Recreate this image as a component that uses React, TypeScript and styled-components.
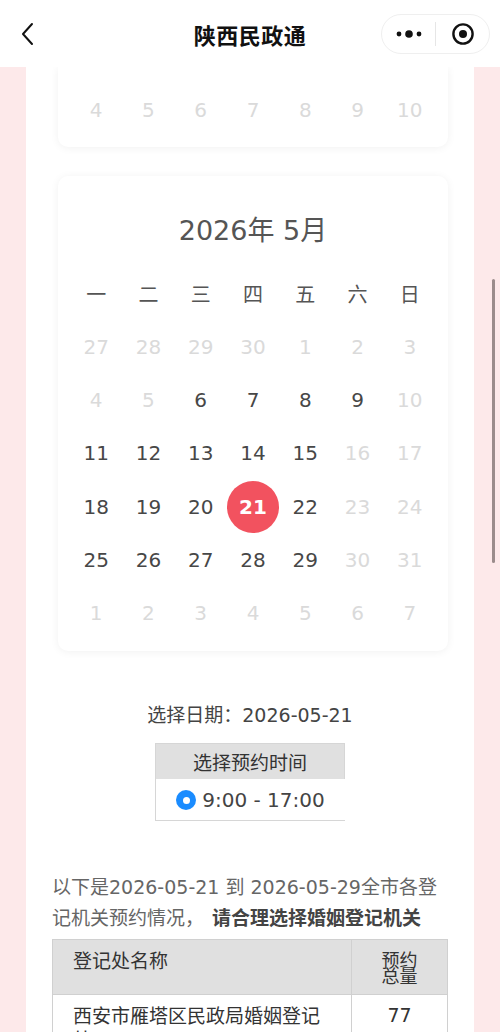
import React from "react";
import styled, { createGlobalStyle, css } from "styled-components";

const GlobalStyle = createGlobalStyle`
  html, body {
    margin: 0;
    padding: 0;
    overflow: hidden;
    background: #fde9ea;
  }
  body {
    font-family: "DejaVu Sans", "Noto Sans CJK SC", sans-serif;
    color: #444;
  }
  * { box-sizing: border-box; }
`;

const Page = styled.div`
  height: 1032px;
  overflow: hidden;
  background: #fde9ea;
  position: relative;
`;

const Header = styled.header`
  height: 67px;
  background: #fff;
  display: grid;
  grid-template-columns: 1fr auto 1fr;
  align-items: center;
  position: relative;
  z-index: 2;
`;

const BackButton = styled.div`
  justify-self: start;
  padding-left: 20px;
  display: flex;
  align-items: center;
`;

const Title = styled.h1`
  margin: 0;
  font-family: "Noto Sans CJK SC", sans-serif;
  font-size: 22px;
  font-weight: 700;
  color: #111;
  letter-spacing: 0.5px;
`;

const Capsule = styled.div`
  justify-self: end;
  margin-right: 10px;
  width: 109px;
  height: 40px;
  border: 1px solid #efefef;
  border-radius: 20px;
  display: flex;
  align-items: center;
`;

const CapsuleHalf = styled.div`
  flex: 1;
  display: flex;
  align-items: center;
  justify-content: center;
`;

const CapsuleDivider = styled.div`
  width: 1px;
  height: 24px;
  background: #e6e6e6;
`;

const Column = styled.main`
  margin: 0 26px;
  background: #fff;
  padding-bottom: 40px;
`;

const Card = styled.section<{ $cut?: boolean }>`
  margin: 0 26px 0 32px;
  background: #fff;
  border-radius: ${(p) => (p.$cut ? "0 0 10px 10px" : "10px")};
  box-shadow: 0 1px 8px rgba(0, 0, 0, 0.06);
  padding: ${(p) => (p.$cut ? "16px 12px 11px" : "31px 12px 11px")};
  & + & {
    margin-top: 29px;
  }
`;

const MonthTitle = styled.div`
  text-align: center;
  font-size: 27px;
  line-height: 48px;
  color: #555;
  margin-bottom: 12px;
`;

const Grid = styled.div`
  display: grid;
  grid-template-columns: repeat(7, 1fr);
  grid-auto-rows: 53.2px;
`;

const WeekDay = styled.div`
  display: flex;
  align-items: center;
  justify-content: center;
  font-family: "Noto Sans CJK SC", sans-serif;
  font-size: 20px;
  color: #555;
`;

const Day = styled.div<{ $muted?: boolean; $selected?: boolean }>`
  display: flex;
  align-items: center;
  justify-content: center;
  font-size: 20px;
  color: ${(p) => (p.$muted ? "#dadada" : "#474747")};
  ${(p) =>
    p.$selected &&
    css`
      & > span {
        width: 52px;
        height: 52px;
        border-radius: 50%;
        background: #f2525f;
        color: #fff;
        font-weight: 700;
        display: flex;
        align-items: center;
        justify-content: center;
      }
    `}
`;

const SelectedDate = styled.div`
  margin-top: 49px;
  text-align: center;
  font-size: 19px;
  line-height: 30px;
  color: #444;
`;

const TimeBox = styled.div`
  width: 190px;
  margin: 13px auto 0;
`;

const TimeHead = styled.div`
  height: 36px;
  background: #e0e0e0;
  border: 1px solid #d6d6d6;
  border-bottom: none;
  display: flex;
  align-items: center;
  justify-content: center;
  font-family: "Noto Sans CJK SC", sans-serif;
  font-size: 19px;
  color: #333;
`;

const TimeOption = styled.label`
  height: 42px;
  padding-top: 2px;
  border-left: 1px solid #d6d6d6;
  border-bottom: 1px solid #d6d6d6;
  display: flex;
  align-items: center;
  justify-content: center;
  gap: 6px;
  font-size: 20px;
  color: #444;
`;

const Radio = styled.span`
  width: 20px;
  height: 20px;
  border-radius: 50%;
  background: #1a8cff;
  display: flex;
  align-items: center;
  justify-content: center;
  &::after {
    content: "";
    width: 7px;
    height: 7px;
    border-radius: 50%;
    background: #fff;
  }
`;

const Notice = styled.p`
  margin: 51px 26px 0;
  font-size: 19px;
  line-height: 31px;
  color: #666;
`;

const Strong = styled.b`
  color: #444;
  font-weight: 700;
  margin-left: 8px;
`;

const Table = styled.table`
  margin: 5px 26px 0;
  width: calc(100% - 52px);
  border-collapse: collapse;
  font-family: "Noto Sans CJK SC", sans-serif;
`;

const Th = styled.th<{ $narrow?: boolean }>`
  background: #e0e0e0;
  border: 1px solid #d0d0d0;
  height: 55px;
  vertical-align: top;
  font-weight: 400;
  color: #333;
  text-align: left;
  font-size: 19px;
  line-height: 24px;
  padding: 8px 20px;
  ${(p) =>
    p.$narrow &&
    css`
      width: 96px;
      text-align: center;
      font-size: 18px;
      line-height: 16px;
      padding: 11px 28px 0;
    `}
`;

const Td = styled.td<{ $num?: boolean }>`
  border: 1px solid #d0d0d0;
  border-top: none;
  vertical-align: top;
  font-size: 19px;
  line-height: 24px;
  color: #333;
  padding: 8px 20px;
  text-align: ${(p) => (p.$num ? "center" : "left")};
  ${(p) =>
    p.$num &&
    css`
      font-family: "DejaVu Sans", sans-serif;
    `}
`;

const ScrollThumb = styled.div`
  position: absolute;
  right: 5px;
  top: 279px;
  width: 3px;
  height: 284px;
  border-radius: 2px;
  background: #9b8c8c;
`;

type Cell = { d: number; muted?: boolean; selected?: boolean };

const mayRows: Cell[][] = [
  [27, 28, 29, 30, 1, 2, 3].map((d) => ({ d, muted: true })),
  [
    { d: 4, muted: true },
    { d: 5, muted: true },
    { d: 6 },
    { d: 7 },
    { d: 8 },
    { d: 9 },
    { d: 10, muted: true },
  ],
  [
    { d: 11 },
    { d: 12 },
    { d: 13 },
    { d: 14 },
    { d: 15 },
    { d: 16, muted: true },
    { d: 17, muted: true },
  ],
  [
    { d: 18 },
    { d: 19 },
    { d: 20 },
    { d: 21, selected: true },
    { d: 22 },
    { d: 23, muted: true },
    { d: 24, muted: true },
  ],
  [
    { d: 25 },
    { d: 26 },
    { d: 27 },
    { d: 28 },
    { d: 29 },
    { d: 30, muted: true },
    { d: 31, muted: true },
  ],
  [1, 2, 3, 4, 5, 6, 7].map((d) => ({ d, muted: true })),
];

const aprilTail: Cell[] = [4, 5, 6, 7, 8, 9, 10].map((d) => ({ d, muted: true }));

const weekDays = ["一", "二", "三", "四", "五", "六", "日"];

function Days({ cells }: { cells: Cell[] }) {
  return (
    <>
      {cells.map((c, i) => (
        <Day key={i} $muted={c.muted} $selected={c.selected}>
          <span>{c.d}</span>
        </Day>
      ))}
    </>
  );
}

export default function App() {
  return (
    <Page>
      <GlobalStyle />
      <Header>
        <BackButton>
          <svg width="14" height="24" viewBox="0 0 14 24">
            <path d="M12 2 L3 12 L12 22" fill="none" stroke="#111" strokeWidth="2" strokeLinecap="round" strokeLinejoin="round" />
          </svg>
        </BackButton>
        <Title>陕西民政通</Title>
        <Capsule>
          <CapsuleHalf>
            <svg width="28" height="10" viewBox="0 0 28 10">
              <circle cx="4" cy="5" r="2.4" fill="#111" />
              <circle cx="14" cy="5" r="3.8" fill="#111" />
              <circle cx="24" cy="5" r="2.4" fill="#111" />
            </svg>
          </CapsuleHalf>
          <CapsuleDivider />
          <CapsuleHalf>
            <svg width="24" height="24" viewBox="0 0 24 24">
              <circle cx="12" cy="12" r="9.6" fill="none" stroke="#111" strokeWidth="2.4" />
              <circle cx="12" cy="12" r="4" fill="#111" />
            </svg>
          </CapsuleHalf>
        </Capsule>
      </Header>
      <Column>
        <Card $cut>
          <Grid>
            <Days cells={aprilTail} />
          </Grid>
        </Card>
        <Card>
          <MonthTitle>2026年 5月</MonthTitle>
          <Grid>
            {weekDays.map((w) => (
              <WeekDay key={w}>{w}</WeekDay>
            ))}
            {mayRows.map((row, i) => (
              <Days key={i} cells={row} />
            ))}
          </Grid>
        </Card>
        <SelectedDate>选择日期：2026-05-21</SelectedDate>
        <TimeBox>
          <TimeHead>选择预约时间</TimeHead>
          <TimeOption>
            <Radio />
            9:00 - 17:00
          </TimeOption>
        </TimeBox>
        <Notice>
          以下是2026-05-21 到 2026-05-29全市各登记机关预约情况，
          <Strong>请合理选择婚姻登记机关</Strong>
        </Notice>
        <Table>
          <thead>
            <tr>
              <Th>登记处名称</Th>
              <Th $narrow>预约总量</Th>
            </tr>
          </thead>
          <tbody>
            <tr>
              <Td>西安市雁塔区民政局婚姻登记处</Td>
              <Td $num>77</Td>
            </tr>
          </tbody>
        </Table>
      </Column>
      <ScrollThumb />
    </Page>
  );
}
